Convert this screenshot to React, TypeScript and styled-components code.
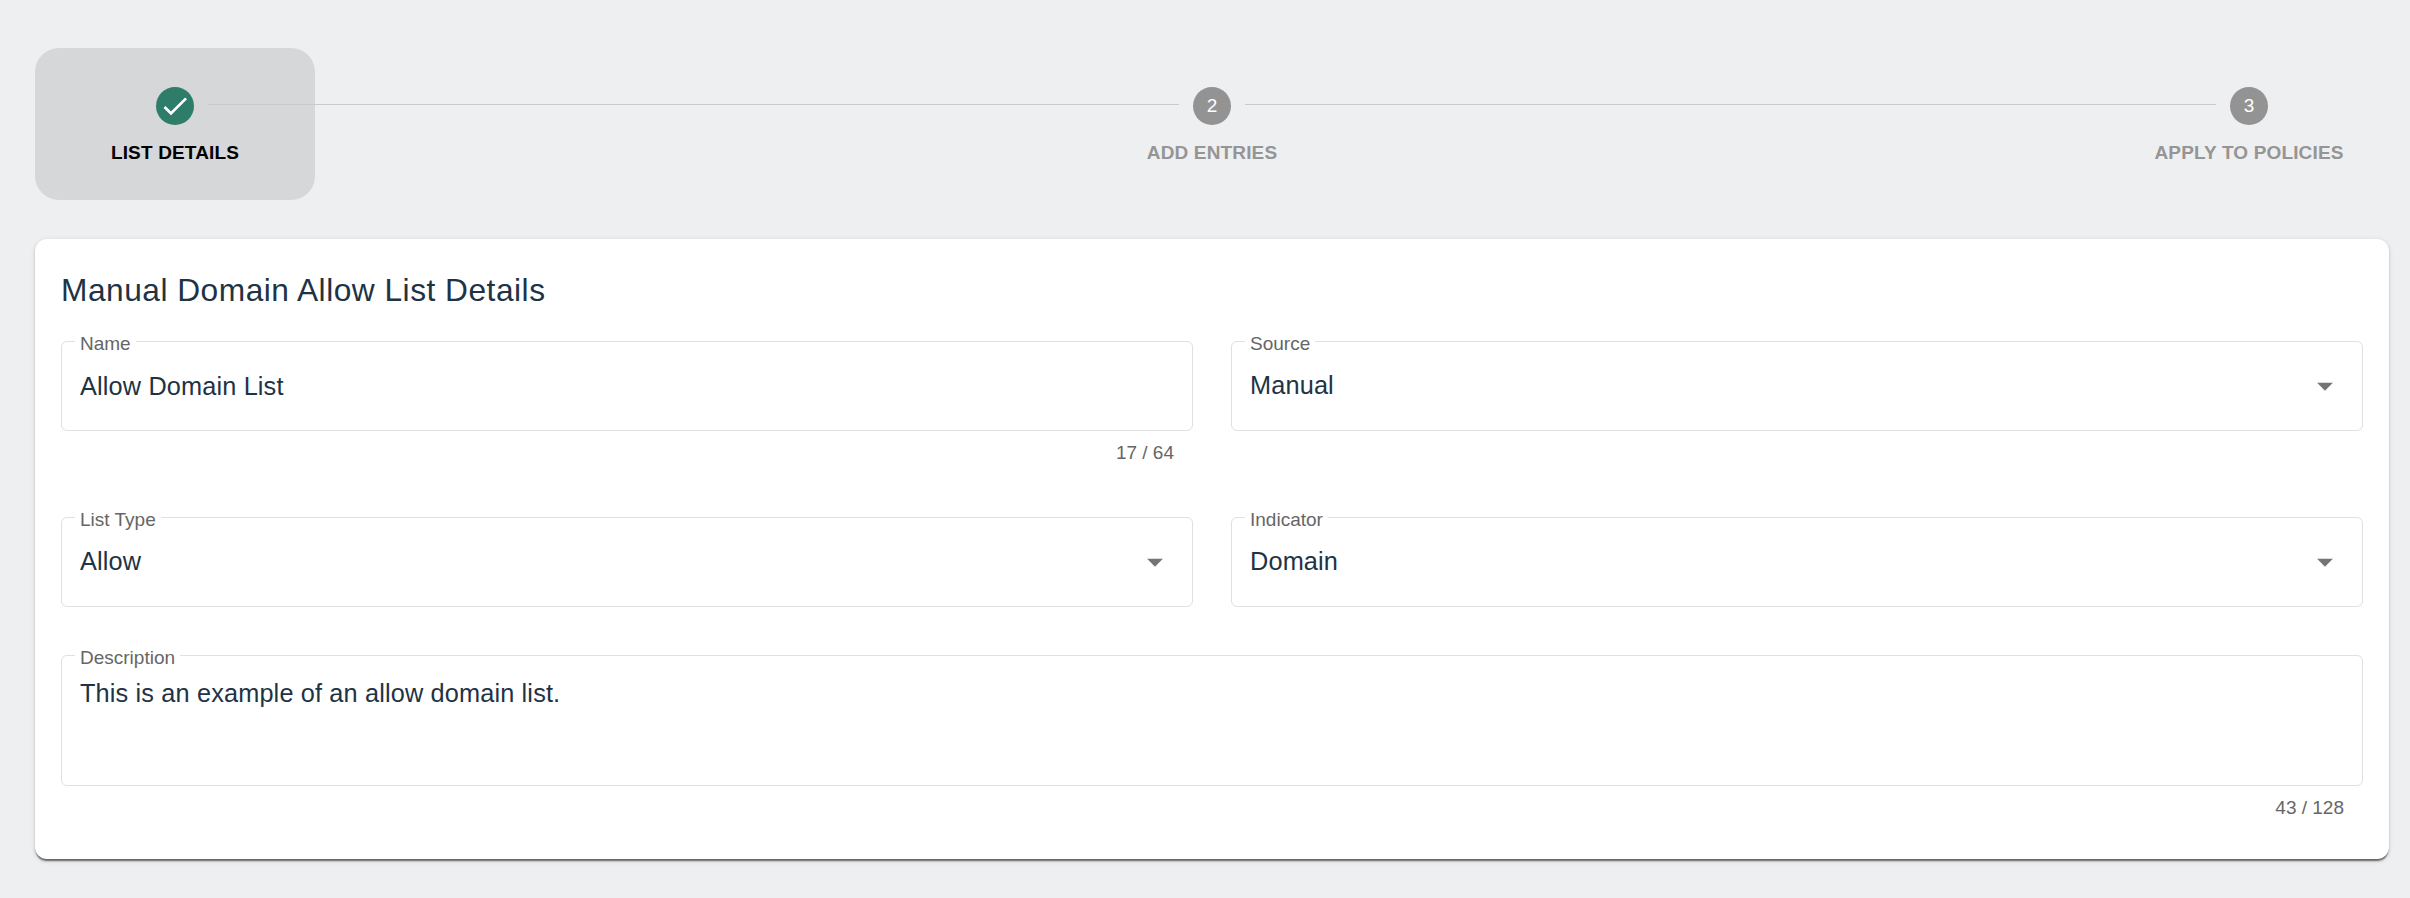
import React from "react";
import styled, { createGlobalStyle } from "styled-components";

const Global = createGlobalStyle`
  html, body { margin: 0; padding: 0; background: #eeeff1; }
  body { font-family: "Liberation Sans", Arial, sans-serif; }
`;

const Page = styled.div`
  box-sizing: border-box;
  width: 2410px;
  height: 898px;
  padding: 48px 21px 0 35px;
  overflow: hidden;
`;

const Stepper = styled.ol`
  display: flex;
  justify-content: space-between;
  list-style: none;
  margin: 0 0 39px;
  padding: 0;
`;

const Step = styled.li<{ $active?: boolean }>`
  position: relative;
  box-sizing: border-box;
  width: 280px;
  height: 152px;
  padding-top: 39px;
  display: flex;
  flex-direction: column;
  align-items: center;
  border-radius: 24px;
  background: ${(p) => (p.$active ? "#d6d7d9" : "transparent")};
`;

const Connector = styled.span`
  position: absolute;
  left: calc(50% + 33px);
  top: 56px;
  width: 971px;
  height: 1px;
  background: #c9cacc;
`;

const Circle = styled.span<{ $done?: boolean }>`
  width: 38px;
  height: 38px;
  border-radius: 50%;
  display: flex;
  align-items: center;
  justify-content: center;
  background: ${(p) => (p.$done ? "#2e7d6b" : "#939393")};
  color: #fff;
  font-size: 19px;
`;

const StepLabel = styled.span<{ $active?: boolean }>`
  margin-top: 17px;
  font-size: 19px;
  line-height: 22px;
  font-weight: 700;
  letter-spacing: 0.15px;
  color: ${(p) => (p.$active ? "#000" : "#959595")};
  white-space: nowrap;
`;

const Card = styled.section`
  box-sizing: border-box;
  width: 2354px;
  height: 620px;
  padding: 33px 26px 0;
  background: #fff;
  border-radius: 12px;
  box-shadow: 0 3px 1.6px -1.6px rgba(0, 0, 0, 0.4), 0 1.6px 1.6px 0 rgba(0, 0, 0, 0.2), 0 1.6px 4.8px 0 rgba(0, 0, 0, 0.12);
`;

const Title = styled.h2`
  margin: 0 0 32px;
  font-size: 31.7px;
  line-height: 37px;
  font-weight: 400;
  letter-spacing: 0.5px;
  color: #1e3345;
`;

const Grid = styled.div`
  display: grid;
  grid-template-columns: 1132px 1132px;
  column-gap: 38px;
`;

const Cell = styled.div<{ $wide?: boolean; $before?: number; $after?: number }>`
  grid-column: ${(p) => (p.$wide ? "1 / -1" : "auto")};
  margin-top: ${(p) => p.$before ?? 0}px;
  margin-bottom: ${(p) => p.$after ?? 0}px;
`;

const Box = styled.div<{ $tall?: boolean }>`
  position: relative;
  box-sizing: border-box;
  height: ${(p) => (p.$tall ? "131px" : "90px")};
  padding: ${(p) => (p.$tall ? "22px" : "0")} 18px 0 18px;
  display: flex;
  align-items: ${(p) => (p.$tall ? "flex-start" : "center")};
  justify-content: space-between;
  border: 1px solid #e0e0e0;
  border-radius: 6px;
`;

const FloatLabel = styled.label`
  position: absolute;
  left: 13px;
  top: -8px;
  padding: 0 5px;
  background: #fff;
  font-size: 19px;
  line-height: 20px;
  color: #666;
`;

const Value = styled.div<{ $select?: boolean }>`
  margin-top: ${(p) => (p.$select ? "-2px" : "0")};
  font-size: 25.3px;
  line-height: 30px;
  letter-spacing: 0.15px;
  color: #1e3345;
`;

const Caret = styled.svg`
  width: 38px;
  height: 38px;
  fill: #757575;
  flex: none;
`;

const Counter = styled.div`
  margin: 11px 19px 0 0;
  text-align: right;
  font-size: 19px;
  line-height: 22px;
  color: #666;
`;

const steps = [
  { n: 1, label: "LIST DETAILS" },
  { n: 2, label: "ADD ENTRIES" },
  { n: 3, label: "APPLY TO POLICIES" },
];

const Arrow = () => (
  <Caret viewBox="0 0 24 24">
    <path d="M7 10l5 5 5-5z" />
  </Caret>
);

export default function App() {
  return (
    <Page>
      <Global />
      <Stepper>
        {steps.map((s) => (
          <Step key={s.n} $active={s.n === 1}>
            <Circle $done={s.n === 1}>
              {s.n === 1 ? (
                <svg width="32" height="32" viewBox="0 0 24 24" fill="#fff">
                  <path d="M9 16.17 4.83 12l-1.42 1.41L9 19 21 7l-1.41-1.41z" />
                </svg>
              ) : (
                s.n
              )}
            </Circle>
            <StepLabel $active={s.n === 1}>{s.label}</StepLabel>
            {s.n < 3 && <Connector />}
          </Step>
        ))}
      </Stepper>
      <Card>
        <Title>Manual Domain Allow List Details</Title>
        <Grid>
          <Cell>
            <Box>
              <FloatLabel>Name</FloatLabel>
              <Value>Allow Domain List</Value>
            </Box>
            <Counter>17 / 64</Counter>
          </Cell>
          <Cell>
            <Box>
              <FloatLabel>Source</FloatLabel>
              <Value $select>Manual</Value>
              <Arrow />
            </Box>
          </Cell>
          <Cell $before={53} $after={48}>
            <Box>
              <FloatLabel>List Type</FloatLabel>
              <Value $select>Allow</Value>
              <Arrow />
            </Box>
          </Cell>
          <Cell $before={53} $after={48}>
            <Box>
              <FloatLabel>Indicator</FloatLabel>
              <Value $select>Domain</Value>
              <Arrow />
            </Box>
          </Cell>
          <Cell $wide>
            <Box $tall>
              <FloatLabel>Description</FloatLabel>
              <Value>This is an example of an allow domain list.</Value>
            </Box>
            <Counter>43 / 128</Counter>
          </Cell>
        </Grid>
      </Card>
    </Page>
  );
}
